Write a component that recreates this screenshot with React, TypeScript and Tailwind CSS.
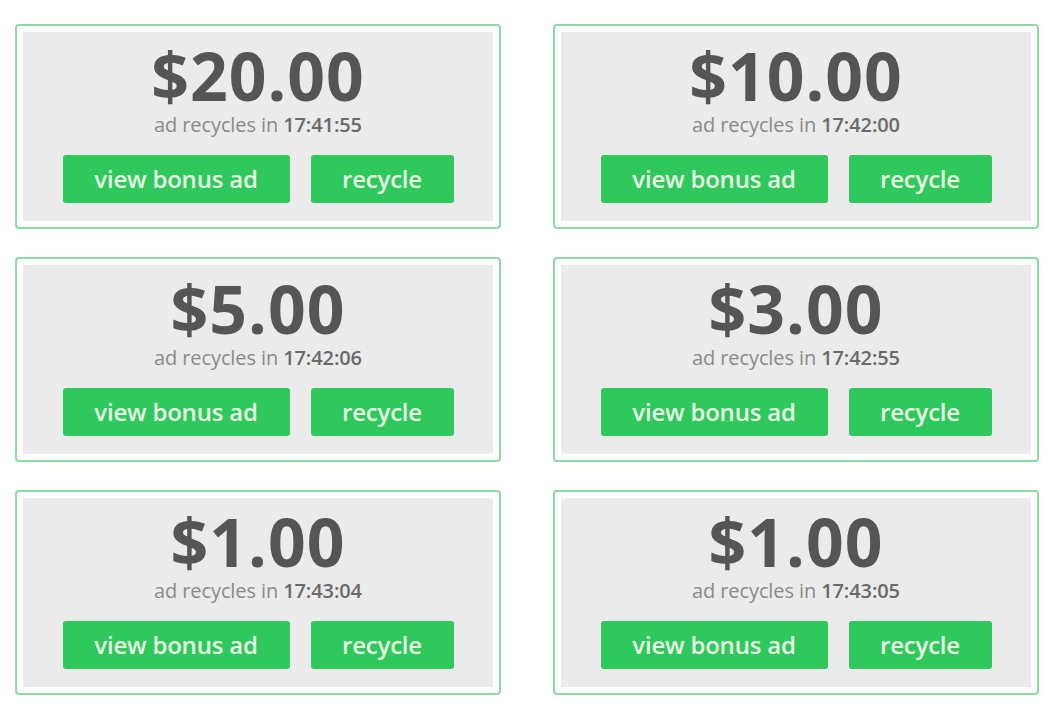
import React from "react";

const cards = [
  { amount: "$20.00", time: "17:41:55" },
  { amount: "$10.00", time: "17:42:00" },
  { amount: "$5.00", time: "17:42:06" },
  { amount: "$3.00", time: "17:42:55" },
  { amount: "$1.00", time: "17:43:04" },
  { amount: "$1.00", time: "17:43:05" },
];

function AdCard({ amount, time }: { amount: string; time: string }) {
  return (
    <div className="h-[205px] rounded-[4px] border-2 border-[#8bd9a3] bg-white p-[6px]">
      <div className="flex h-full flex-col items-center bg-[#ebebeb]">
        <div className="mt-[10px] text-[66px] font-bold leading-none tracking-[1px] text-[#555555]">
          {amount}
        </div>
        <div className="mt-[6px] text-[20px] leading-[22px] tracking-[-0.1px] text-[#8a8a8a]">
          ad recycles in <span className="font-semibold text-[#6a6a6a]">{time}</span>
        </div>
        <div className="mt-[19px] flex gap-[21px]">
          <button className="h-[48px] w-[227px] rounded-[3px] bg-[#2ec85c] text-[24px] font-semibold tracking-[-0.2px] text-[#e9f8e4]">
            view bonus ad
          </button>
          <button className="h-[48px] w-[143px] rounded-[3px] bg-[#2ec85c] text-[24px] font-semibold tracking-[-0.2px] text-[#e9f8e4]">
            recycle
          </button>
        </div>
      </div>
    </div>
  );
}

export default function App() {
  return (
    <div className="min-h-[720px] w-[1057px] bg-white font-['Open_Sans',sans-serif]">
      <div className="grid grid-cols-[486px_486px] gap-x-[52px] gap-y-[28px] pl-[15px] pt-[24px]">
        {cards.map((c, i) => (
          <AdCard key={i} amount={c.amount} time={c.time} />
        ))}
      </div>
    </div>
  );
}
